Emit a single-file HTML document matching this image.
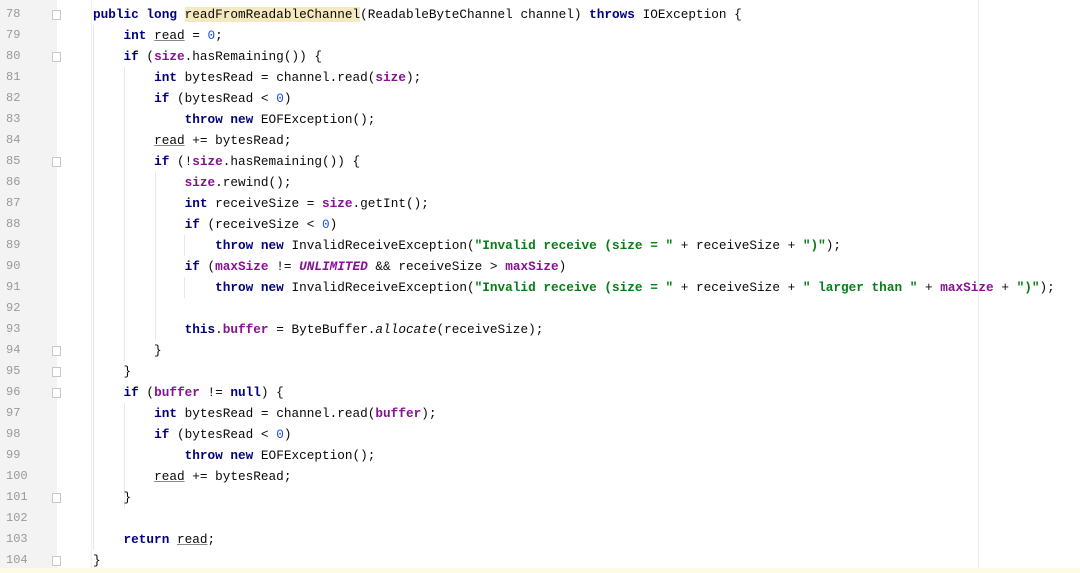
<!DOCTYPE html>
<html><head><meta charset="utf-8"><style>
html,body{margin:0;padding:0;background:#fff;width:1080px;height:573px;overflow:hidden;position:relative}
.g{position:absolute;left:0;top:0;width:57px;height:573px;background:#f3f3f3}
.gl{position:absolute;left:91px;top:0;width:1px;height:573px;background:#f0f0f0}
.rm{position:absolute;left:978px;top:0;width:1px;height:573px;background:#ececec}
.cur{position:absolute;left:0;top:568px;width:1080px;height:5px;background:#fdfbe6}
.l{position:absolute;left:0;height:21px;line-height:21px;width:1080px;font-family:"Liberation Mono",monospace;font-size:12.72px;color:#080808;white-space:pre}
.n{position:absolute;left:6px;color:#999;font-size:12px}
.c{position:absolute;left:93px}
.k{color:#000080;font-weight:bold}
.num{color:#1750eb}
.f{color:#871094;font-weight:bold}
.s{color:#067d17;font-weight:bold}
.i{font-style:italic}
.u{text-decoration:underline;text-decoration-color:#888}
.h{background:#f5eabf}
.fold{position:absolute;left:52px;width:9px;height:10px;border:1px solid #c8c8c8;background:#fff;box-sizing:border-box}
.ig{position:absolute;width:1px;background:#e8e8e8}
</style></head><body>
<div class="g"></div><div class="gl"></div><div class="rm"></div><div class="cur"></div>
<div class="ig" style="left:93px;top:25px;height:525px"></div>
<div class="ig" style="left:124px;top:67px;height:294px"></div>
<div class="ig" style="left:124px;top:403px;height:105px"></div>
<div class="ig" style="left:155px;top:172px;height:168px"></div>
<div class="ig" style="left:184px;top:235px;height:21px"></div>
<div class="ig" style="left:184px;top:277px;height:21px"></div>
<div class="fold" style="top:10px"></div>
<div class="fold" style="top:52px"></div>
<div class="fold" style="top:157px"></div>
<div class="fold" style="top:346px"></div>
<div class="fold" style="top:367px"></div>
<div class="fold" style="top:388px"></div>
<div class="fold" style="top:493px"></div>
<div class="fold" style="top:556px"></div>

<div class="l" style="top:4px"><span class="n">78</span><span class="c"><span class="k">public long </span><span class="h">readFromReadableChannel</span>(ReadableByteChannel channel) <span class="k">throws</span> IOException {</span></div>
<div class="l" style="top:25px"><span class="n">79</span><span class="c">    <span class="k">int</span> <span class="u">read</span> = <span class="num">0</span>;</span></div>
<div class="l" style="top:46px"><span class="n">80</span><span class="c">    <span class="k">if</span> (<span class="f">size</span>.hasRemaining()) {</span></div>
<div class="l" style="top:67px"><span class="n">81</span><span class="c">        <span class="k">int</span> bytesRead = channel.read(<span class="f">size</span>);</span></div>
<div class="l" style="top:88px"><span class="n">82</span><span class="c">        <span class="k">if</span> (bytesRead &lt; <span class="num">0</span>)</span></div>
<div class="l" style="top:109px"><span class="n">83</span><span class="c">            <span class="k">throw new</span> EOFException();</span></div>
<div class="l" style="top:130px"><span class="n">84</span><span class="c">        <span class="u">read</span> += bytesRead;</span></div>
<div class="l" style="top:151px"><span class="n">85</span><span class="c">        <span class="k">if</span> (!<span class="f">size</span>.hasRemaining()) {</span></div>
<div class="l" style="top:172px"><span class="n">86</span><span class="c">            <span class="f">size</span>.rewind();</span></div>
<div class="l" style="top:193px"><span class="n">87</span><span class="c">            <span class="k">int</span> receiveSize = <span class="f">size</span>.getInt();</span></div>
<div class="l" style="top:214px"><span class="n">88</span><span class="c">            <span class="k">if</span> (receiveSize &lt; <span class="num">0</span>)</span></div>
<div class="l" style="top:235px"><span class="n">89</span><span class="c">                <span class="k">throw new</span> InvalidReceiveException(<span class="s">"Invalid receive (size = "</span> + receiveSize + <span class="s">")"</span>);</span></div>
<div class="l" style="top:256px"><span class="n">90</span><span class="c">            <span class="k">if</span> (<span class="f">maxSize</span> != <span class="f i">UNLIMITED</span> &amp;&amp; receiveSize &gt; <span class="f">maxSize</span>)</span></div>
<div class="l" style="top:277px"><span class="n">91</span><span class="c">                <span class="k">throw new</span> InvalidReceiveException(<span class="s">"Invalid receive (size = "</span> + receiveSize + <span class="s">" larger than "</span> + <span class="f">maxSize</span> + <span class="s">")"</span>);</span></div>
<div class="l" style="top:298px"><span class="n">92</span></div>
<div class="l" style="top:319px"><span class="n">93</span><span class="c">            <span class="k">this</span>.<span class="f">buffer</span> = ByteBuffer.<span class="i">allocate</span>(receiveSize);</span></div>
<div class="l" style="top:340px"><span class="n">94</span><span class="c">        }</span></div>
<div class="l" style="top:361px"><span class="n">95</span><span class="c">    }</span></div>
<div class="l" style="top:382px"><span class="n">96</span><span class="c">    <span class="k">if</span> (<span class="f">buffer</span> != <span class="k">null</span>) {</span></div>
<div class="l" style="top:403px"><span class="n">97</span><span class="c">        <span class="k">int</span> bytesRead = channel.read(<span class="f">buffer</span>);</span></div>
<div class="l" style="top:424px"><span class="n">98</span><span class="c">        <span class="k">if</span> (bytesRead &lt; <span class="num">0</span>)</span></div>
<div class="l" style="top:445px"><span class="n">99</span><span class="c">            <span class="k">throw new</span> EOFException();</span></div>
<div class="l" style="top:466px"><span class="n">100</span><span class="c">        <span class="u">read</span> += bytesRead;</span></div>
<div class="l" style="top:487px"><span class="n">101</span><span class="c">    }</span></div>
<div class="l" style="top:508px"><span class="n">102</span></div>
<div class="l" style="top:529px"><span class="n">103</span><span class="c">    <span class="k">return</span> <span class="u">read</span>;</span></div>
<div class="l" style="top:550px"><span class="n">104</span><span class="c">}</span></div>
</body></html>
